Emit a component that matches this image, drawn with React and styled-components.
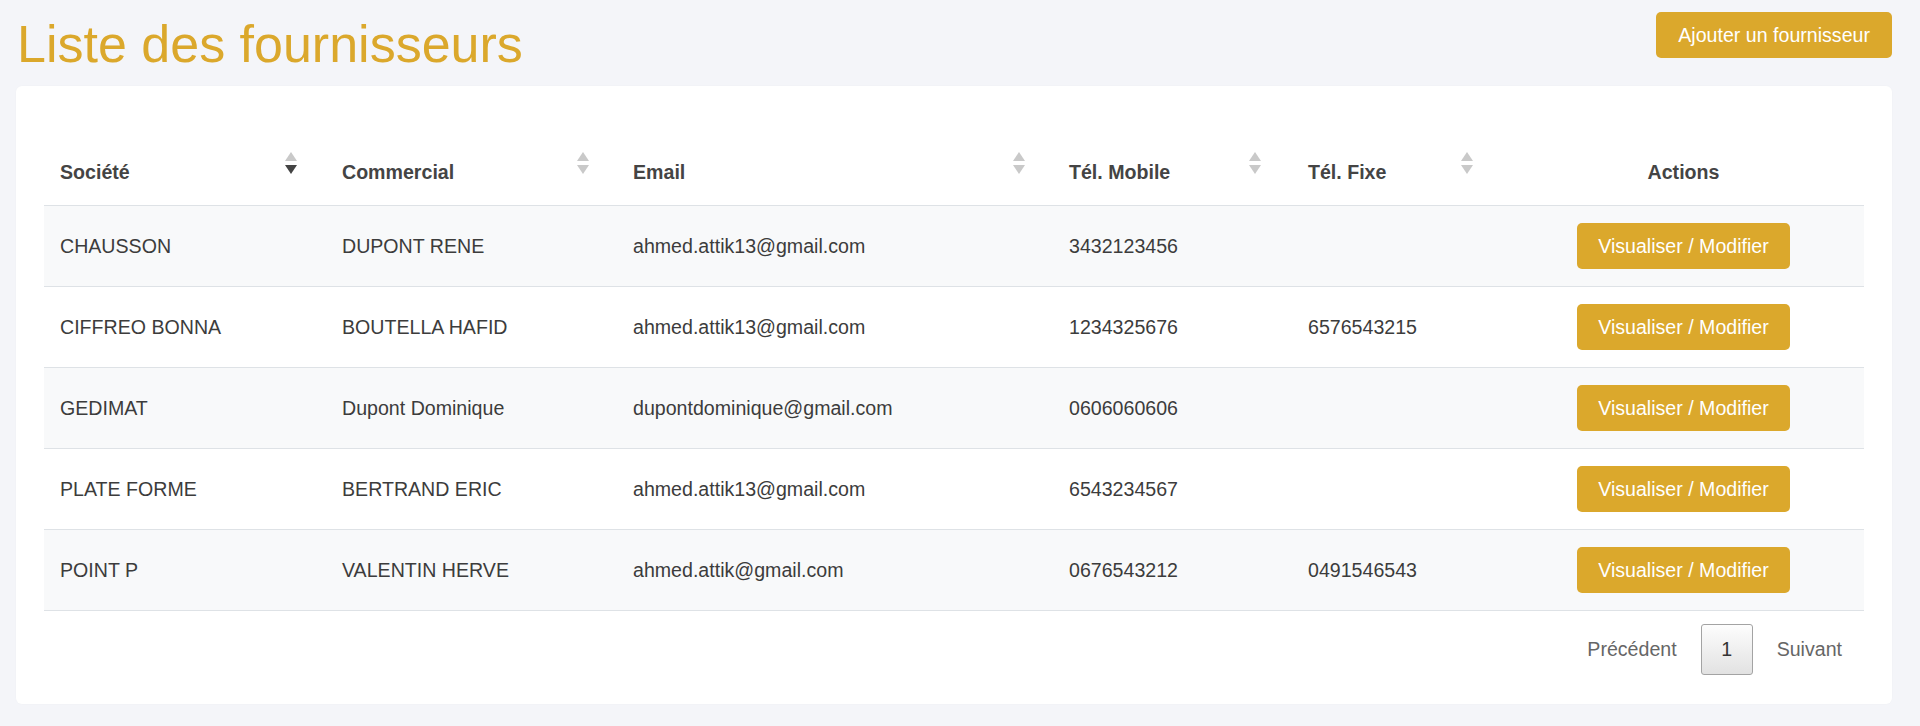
import styled, { createGlobalStyle } from "styled-components";

const GlobalStyle = createGlobalStyle`
  html, body {
    margin: 0;
    padding: 0;
    background: #f4f5f9;
  }
  body {
    font-family: "Liberation Sans", Arial, sans-serif;
    color: #3c3c3c;
  }
`;

const GOLD = "#dba82c";

const Page = styled.div`
  width: 1920px;
  height: 726px;
  box-sizing: border-box;
  padding: 12px 28px 0 16px;
  background: #f4f5f9;
`;

const TopBar = styled.div`
  display: flex;
  justify-content: space-between;
  align-items: flex-start;
  height: 74px;
`;

const Title = styled.h1`
  margin: 2px 0 0 1px;
  font-size: 52px;
  font-weight: 400;
  line-height: 60px;
  color: ${GOLD};
`;

const GoldButton = styled.button`
  border: none;
  background: ${GOLD};
  color: #fff;
  font-family: "Liberation Sans", Arial, sans-serif;
  font-size: 19.6px;
  height: ${(p) => p.$height || "46px"};
  padding: 0 ${(p) => p.$padX || "21px"};
  border-radius: 5px;
  cursor: pointer;
`;

const Card = styled.div`
  background: #fff;
  border-radius: 6px;
  padding: 54px 28px 0 28px;
  height: 618px;
  box-sizing: border-box;
  box-shadow: 0 0 2px rgba(0, 0, 0, 0.03);
`;

const Table = styled.table`
  width: 100%;
  border-collapse: collapse;
  table-layout: fixed;
  font-size: 19.6px;
`;

const HeadCell = styled.th`
  height: 65px;
  padding: 0 ${(p) => p.$padRight || "30px"} 0 16px;
  text-align: ${(p) => (p.$center ? "center" : "left")};
  font-weight: 700;
  color: #444;
  border-bottom: 1px solid #dee2e6;
  vertical-align: middle;
`;

const HeadInner = styled.div`
  display: flex;
  justify-content: space-between;
  align-items: center;
`;

const SortIcon = styled.svg`
  width: 12px;
  height: 22px;
  flex: none;
  margin-bottom: 20px;
`;

const Row = styled.tr`
  background: ${(p) => (p.$striped ? "#f8f9fa" : "#fff")};
  border-bottom: 1px solid #dee2e6;
`;

const Cell = styled.td`
  height: 80px;
  padding: 0 16px;
  color: #3c3c3c;
  text-align: ${(p) => (p.$center ? "center" : "left")};
  vertical-align: middle;
  white-space: nowrap;
`;

const Pager = styled.div`
  display: flex;
  justify-content: flex-end;
  align-items: center;
  gap: 24px;
  padding: 13px 22px 0 0;
  font-size: 19.6px;
  color: #666;
`;

const PageNumber = styled.div`
  width: 50px;
  height: 49px;
  display: flex;
  align-items: center;
  justify-content: center;
  border: 1px solid #a3a3a3;
  border-radius: 3px;
  background: linear-gradient(#fdfdfd, #e2e2e2);
  color: #333;
`;

const Sort = ({ active }) => (
  <SortIcon viewBox="0 0 12 22">
    <polygon points="6,0 12,9 0,9" fill="#c9c9c9" />
    <polygon points="0,13 12,13 6,22" fill={active ? "#444" : "#c9c9c9"} />
  </SortIcon>
);

const columns = [
  { label: "Société", width: 282, sort: true, active: true, pad: "29px" },
  { label: "Commercial", width: 291, sort: true, pad: "28px" },
  { label: "Email", width: 436, sort: true, pad: "28px" },
  { label: "Tél. Mobile", width: 239, sort: true, pad: "31px" },
  { label: "Tél. Fixe", width: 211, sort: true, pad: "30px" },
  { label: "Actions", width: 361, center: true },
];

const suppliers = [
  ["CHAUSSON", "DUPONT RENE", "ahmed.attik13@gmail.com", "3432123456", ""],
  ["CIFFREO BONNA", "BOUTELLA HAFID", "ahmed.attik13@gmail.com", "1234325676", "6576543215"],
  ["GEDIMAT", "Dupont Dominique", "dupontdominique@gmail.com", "0606060606", ""],
  ["PLATE FORME", "BERTRAND ERIC", "ahmed.attik13@gmail.com", "6543234567", ""],
  ["POINT P", "VALENTIN HERVE", "ahmed.attik@gmail.com", "0676543212", "0491546543"],
];

export default function App() {
  return (
    <>
      <GlobalStyle />
      <Page>
        <TopBar>
          <Title>Liste des fournisseurs</Title>
          <GoldButton $padX="22px">Ajouter un fournisseur</GoldButton>
        </TopBar>
        <Card>
          <Table>
            <colgroup>
              {columns.map((c) => (
                <col key={c.label} style={{ width: c.width }} />
              ))}
            </colgroup>
            <thead>
              <tr>
                {columns.map((c) =>
                  c.sort ? (
                    <HeadCell key={c.label} $padRight={c.pad}>
                      <HeadInner>
                        <span>{c.label}</span>
                        <Sort active={c.active} />
                      </HeadInner>
                    </HeadCell>
                  ) : (
                    <HeadCell key={c.label} $center $padRight="16px">
                      {c.label}
                    </HeadCell>
                  )
                )}
              </tr>
            </thead>
            <tbody>
              {suppliers.map((s, i) => (
                <Row key={s[0]} $striped={i % 2 === 0}>
                  {s.map((v, j) => (
                    <Cell key={j}>{v}</Cell>
                  ))}
                  <Cell $center>
                    <GoldButton>Visualiser / Modifier</GoldButton>
                  </Cell>
                </Row>
              ))}
            </tbody>
          </Table>
          <Pager>
            <span>Précédent</span>
            <PageNumber>1</PageNumber>
            <span>Suivant</span>
          </Pager>
        </Card>
      </Page>
    </>
  );
}
